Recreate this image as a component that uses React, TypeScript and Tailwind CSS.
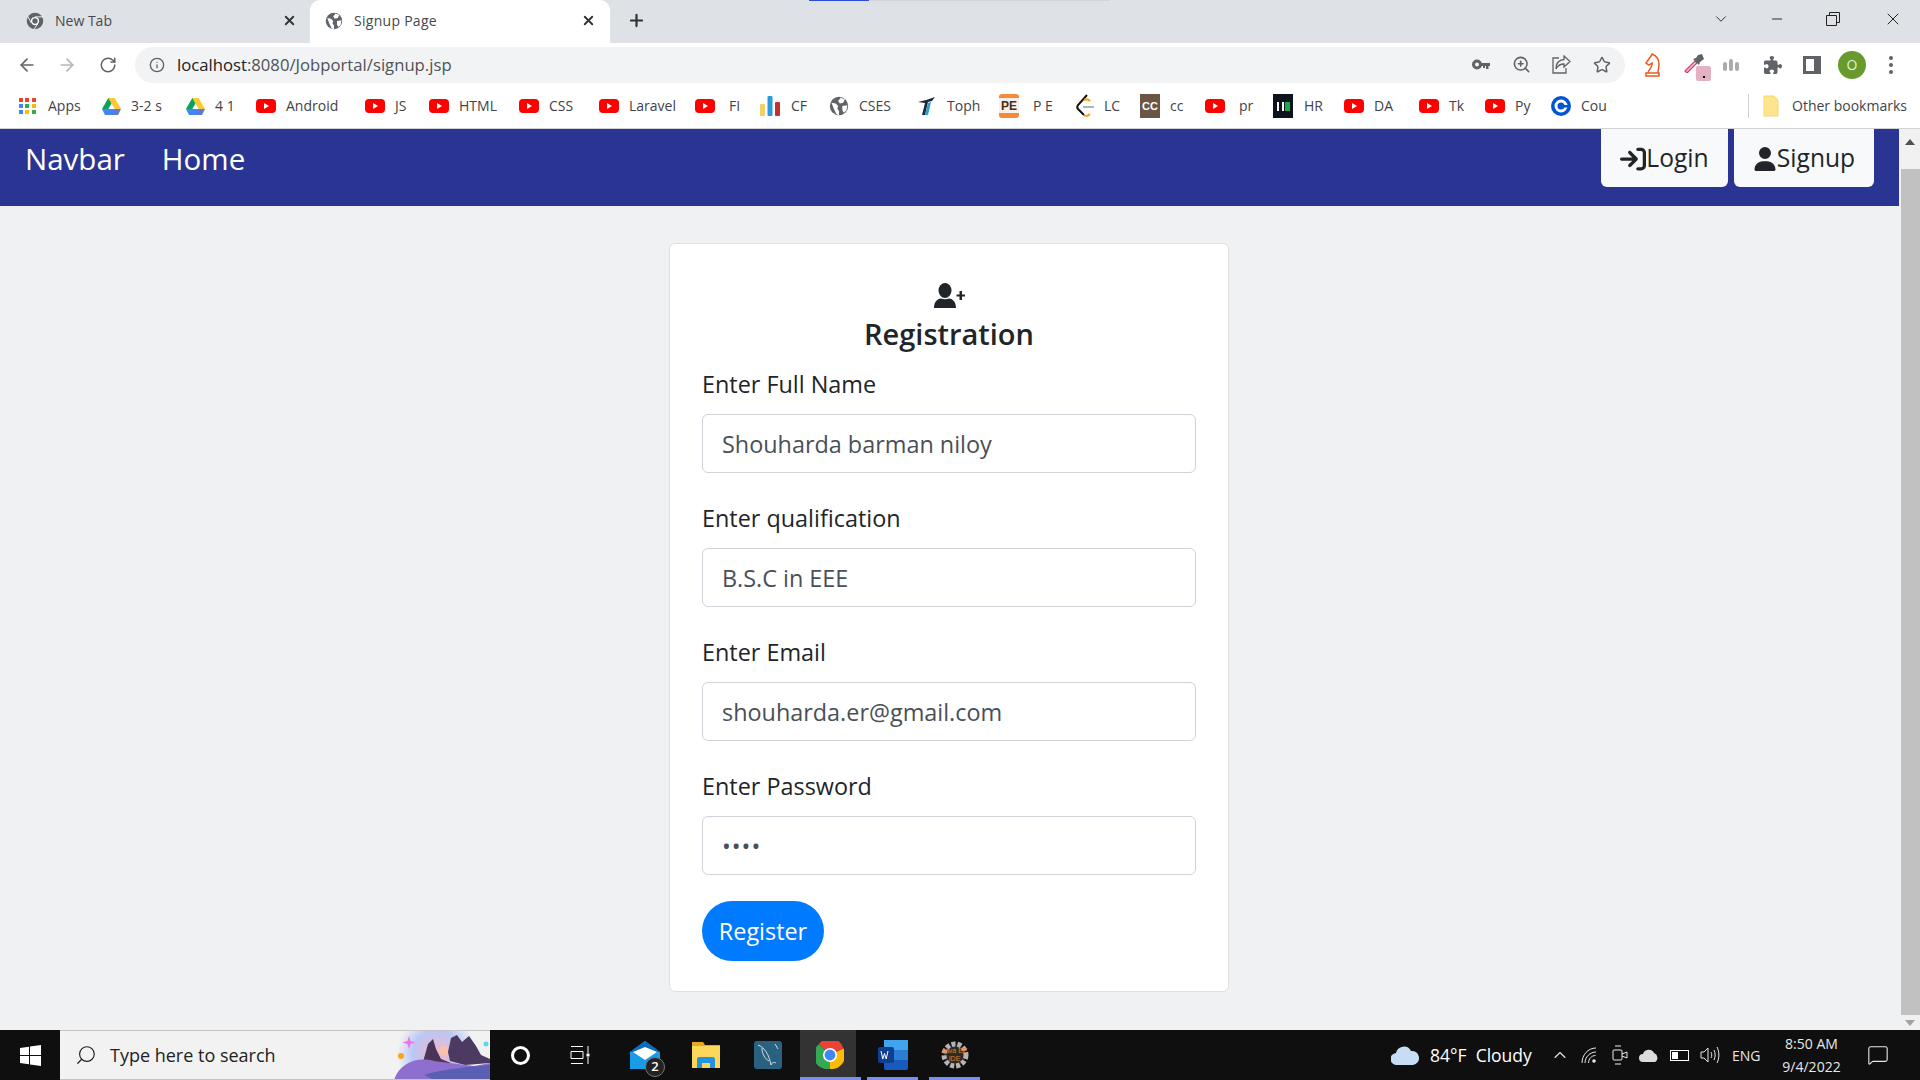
import { ArrowLeft, ArrowRight, ChevronDown, ChevronUp, Info, Minus, MessageSquare, Plus, RotateCw, Search, Star, X, ZoomIn } from "lucide-react";
import { FaArrowRightToBracket, FaPuzzlePiece, FaUser } from "react-icons/fa6";
import { ReactNode } from "react";

function Globe({ size = 18 }: { size?: number }) {
  return (
    <svg width={size} height={size} viewBox="0 0 24 24">
      <circle cx="12" cy="12" r="11" fill="#5f6368" />
      <path d="M3 8l5 1 3 3-1 3 2 3v5l-3-1-3-6zM14 2l5 2-2 4-4 1-2-3zM16 12l6-1-1 6-3 3-2-3z" fill="#fff" />
    </svg>
  );
}

function ChromeGrey() {
  return (
    <svg width="18" height="18" viewBox="0 0 24 24">
      <circle cx="12" cy="12" r="11" fill="#5f6368" />
      <circle cx="12" cy="12" r="5.5" fill="#fff" />
      <circle cx="12" cy="12" r="3.6" fill="#5f6368" />
      <path d="M12 6.5h10M7 14.5L2.5 6M15.5 16l-5 7.5" stroke="#fff" strokeWidth="1.2" />
    </svg>
  );
}

function Youtube() {
  return (
    <svg width="20" height="14" viewBox="0 0 20 14">
      <rect width="20" height="14" rx="4" fill="#f00" />
      <path d="M8 4l5 3-5 3z" fill="#fff" />
    </svg>
  );
}

function Drive() {
  return (
    <svg width="19" height="17" viewBox="0 0 19 17">
      <path d="M6.300 0h6.400l-3.200 5.500-3.200 5.500h-6.300z" fill="#0ba25e" />
      <path d="M6.300 0h6.400l6.300 11h-6.300z" fill="#fcc934" />
      <path d="M0 11h19l-3 6h-13z" fill="#4285f4" />
      <path d="M12.700 11h6.300l-3 6h-6z" fill="#ea4335" opacity="0.15" />
    </svg>
  );
}

function Apps() {
  const colors = ["#ea4335", "#ea4335", "#ea4335", "#4285f4", "#34a853", "#fbbc05", "#4285f4", "#fbbc05", "#34a853"];
  return (
    <div className="grid w-[17px] grid-cols-3 gap-[2px]">
      {colors.map((c, i) => (
        <svg key={i} width="4" height="4"><rect width="4" height="4" fill={c} /></svg>
      ))}
    </div>
  );
}

function Bars() {
  return (
    <svg width="20" height="20" viewBox="0 0 20 20">
      <rect x="0" y="8" width="5" height="12" rx="1" fill="#f5cf63" />
      <rect x="7.500" y="0" width="5" height="20" rx="1" fill="#2d9bd8" />
      <rect x="15" y="6" width="5" height="14" rx="1" fill="#c62f2f" />
    </svg>
  );
}

function Toph() {
  return (
    <svg width="20" height="20" viewBox="0 0 20 20">
      <path d="M1 6c5-1 11-3 17-5l-3 4-4 1-3 13H5l3-12z" fill="#1b2a36" />
      <path d="M11 7l3-1-3 13H8z" fill="#2d9bd8" />
    </svg>
  );
}

function PeIcon() {
  return (
    <div className="flex h-[24px] w-[20px] flex-col overflow-hidden rounded-[3px] bg-[#f5893d]">
      <div className="mt-[4px] flex h-[15px] items-center justify-center bg-[#f8f1e8] font-['Liberation_Sans'] text-[12px] font-bold text-[#4b2a16]">PE</div>
    </div>
  );
}

function Leet() {
  return (
    <svg width="20" height="24" viewBox="0 0 20 24" fill="none">
      <path d="M12 1L3 11c-1 1.500-1 3 0 4l6 6" stroke="#111" strokeWidth="2" />
      <path d="M9 21c2 1.500 4 1 6-1" stroke="#f6a21a" strokeWidth="2" />
      <path d="M8 13h11" stroke="#b3b3b3" strokeWidth="2" />
      <path d="M9 6c2-1 4-1 6 1" stroke="#f6a21a" strokeWidth="2" />
    </svg>
  );
}

function CcIcon() {
  return (
    <div className="flex h-[24px] w-[20px] items-center justify-center bg-[#6b5544] font-['Liberation_Sans'] text-[11px] font-bold text-white">CC</div>
  );
}

function HrIcon() {
  return (
    <div className="flex h-[24px] w-[20px] items-center justify-center gap-[1px] bg-[#0e141e]">
      <span className="h-[9px] w-[7px] border-x-[2px] border-white" />
      <span className="h-[9px] w-[5px] bg-[#1ba94c]" />
    </div>
  );
}

function Coursera() {
  return (
    <svg width="20" height="20" viewBox="0 0 20 20">
      <circle cx="10" cy="10" r="10" fill="#0056d2" />
      <circle cx="10" cy="10" r="5" fill="none" stroke="#fff" strokeWidth="3" />
      <rect x="13" y="9" width="5" height="2.500" fill="#0056d2" />
    </svg>
  );
}

const bookmarks: { icon: ReactNode; label: string; w: string; gap: string }[] = [
  { icon: <Apps />, label: "Apps", w: "w-[83px]", gap: "w-[29px]" },
  { icon: <Drive />, label: "3-2 s", w: "w-[84px]", gap: "w-[29px]" },
  { icon: <Drive />, label: "4 1", w: "w-[70px]", gap: "w-[29px]" },
  { icon: <Youtube />, label: "Android", w: "w-[109px]", gap: "w-[30px]" },
  { icon: <Youtube />, label: "JS", w: "w-[64px]", gap: "w-[30px]" },
  { icon: <Youtube />, label: "HTML", w: "w-[90px]", gap: "w-[30px]" },
  { icon: <Youtube />, label: "CSS", w: "w-[80px]", gap: "w-[30px]" },
  { icon: <Youtube />, label: "Laravel", w: "w-[96px]", gap: "w-[30px]" },
  { icon: <Youtube />, label: "FI", w: "w-[65px]", gap: "w-[34px]" },
  { icon: <Bars />, label: "CF", w: "w-[69px]", gap: "w-[31px]" },
  { icon: <Globe size={20} />, label: "CSES", w: "w-[88px]", gap: "w-[30px]" },
  { icon: <Toph />, label: "Toph", w: "w-[82px]", gap: "w-[30px]" },
  { icon: <PeIcon />, label: "P E", w: "w-[76px]", gap: "w-[34px]" },
  { icon: <Leet />, label: "LC", w: "w-[65px]", gap: "w-[29px]" },
  { icon: <CcIcon />, label: "cc", w: "w-[65px]", gap: "w-[30px]" },
  { icon: <Youtube />, label: "pr", w: "w-[68px]", gap: "w-[34px]" },
  { icon: <HrIcon />, label: "HR", w: "w-[71px]", gap: "w-[31px]" },
  { icon: <Youtube />, label: "DA", w: "w-[75px]", gap: "w-[30px]" },
  { icon: <Youtube />, label: "Tk", w: "w-[66px]", gap: "w-[30px]" },
  { icon: <Youtube />, label: "Py", w: "w-[66px]", gap: "w-[30px]" },
  { icon: <Coursera />, label: "Cou", w: "w-[60px]", gap: "w-[30px]" },
];

function TabStrip() {
  return (
    <div className="relative flex h-[43px] items-end bg-[#dee1e6] text-[14px] text-[#45494e]">
      <div className="absolute left-[809px] top-0 h-px w-[60px] bg-[#2b4ddb]" />
      <div className="absolute left-[869px] top-0 h-px w-[241px] bg-[#d2d4d8]" />
      <div className="flex h-[43px] w-[310px] items-center pb-[2px] pl-[26px] pr-[13px]">
        <ChromeGrey />
        <span className="ml-[11px] flex-1">New Tab</span>
        <X size={15} strokeWidth={3} color="#333" />
      </div>
      <div className="flex h-[43px] w-[300px] items-center rounded-t-[10px] bg-white pb-[2px] pl-[15px] pr-[14px]">
        <Globe />
        <span className="ml-[11px] flex-1 tracking-[0.02em]">Signup Page</span>
        <X size={15} strokeWidth={3} color="#333" />
      </div>
      <div className="flex h-[43px] w-[1102px] items-center pb-[2px] pl-[17px]">
        <Plus size={19} strokeWidth={2.8} color="#333" />
      </div>
      <div className="flex h-[38px] w-[208px] items-center self-start text-[#222]">
        <ChevronDown size={18} strokeWidth={1.2} />
        <Minus size={16} strokeWidth={1.4} className="ml-[39px]" />
        <svg className="ml-[41px]" width="14" height="14" viewBox="0 0 14 14" fill="none" stroke="#222"><path d="M.5 3.500h10v10H.5zM3.500 3.500v-3h10v10h-3" /></svg>
        <X size={20} strokeWidth={1.2} className="ml-[43px]" />
      </div>
    </div>
  );
}

function Toolbar() {
  return (
    <div className="flex h-[43px] items-center bg-white text-[#5f6368]">
      <ArrowLeft size={20} className="ml-[17px]" />
      <ArrowRight size={20} color="#b4b6b9" className="ml-[20px]" />
      <RotateCw size={18} className="ml-[22px]" />
      <div className="ml-[18px] flex h-[36px] w-[1490px] items-center rounded-full bg-[#f1f3f4]">
        <Info size={16} className="ml-[14px]" />
        <span className="ml-[12px] flex-1 text-[16.7px] text-[#4f5256]">
          <span className="text-[#202124]">localhost</span>:8080/Jobportal/signup.jsp
        </span>
        <svg className="mr-[22px]" width="18" height="11" viewBox="0 0 18 11">
          <circle cx="5" cy="5.500" r="3.500" fill="none" stroke="#5f6368" strokeWidth="3" />
          <path d="M8 4h10v3h-1.500v3h-2.500V7h-1v2h-2V7H8z" fill="#5f6368" />
        </svg>
        <ZoomIn size={19} className="mr-[21px]" />
        <svg className="mr-[22px]" width="19" height="19" viewBox="0 0 19 19" fill="none" stroke="#5f6368" strokeWidth="1.3">
          <path d="M7 3H1v15h13v-5" />
          <path d="M12 1l6 5.500-6 5.500V9c-4 0-6 1-8 5 0-6 3-9 8-9.500z" />
        </svg>
        <Star size={18} className="mr-[14px]" />
      </div>
      <svg className="ml-[19px]" width="17" height="24" viewBox="0 0 17 24" fill="none" stroke="#ea5a1f" strokeWidth="1.5">
        <path d="M2 23h13v-3H2zM4 20c0-3 5-6 4-10l-3 2-3-2 5-7 1-2c5 2 7 6 7 10 0 3-1 6-1 9" />
      </svg>
      <div className="relative ml-[22px] h-[24px] w-[28px]">
        <svg width="22" height="20" viewBox="0 0 22 20" fill="none">
          <path d="M2 18L12 8l2 2L4 20z" fill="#f4bcd0" stroke="#d1416f" strokeWidth="1.2" />
          <path d="M10 6l6 6 1-3 4-3-2-5-4 1-2 3z" fill="#5f6368" />
        </svg>
        <div className="absolute bottom-[-4px] right-0 flex h-[15px] w-[15px] items-end justify-center rounded-[2px] bg-[#e3b1c1] pb-[3px]">
          <div className="h-[2px] w-[2px] bg-black" />
        </div>
      </div>
      <div className="ml-[12px] flex h-[12px] w-[18px] items-end gap-[2px]">
        <div className="h-[9px] w-[4px] rounded-sm bg-[#a9abad]" />
        <div className="h-[12px] w-[4px] rounded-sm bg-[#a9abad]" />
        <div className="h-[9px] w-[4px] rounded-sm bg-[#a9abad]" />
      </div>
      <FaPuzzlePiece size={18} className="ml-[23px]" />
      <div className="ml-[21px] h-[18px] w-[18px] border-[3px] border-r-[7px] border-[#5f6368]" />
      <div className="ml-[17px] flex h-[28px] w-[28px] items-center justify-center rounded-full bg-[#689a2e] text-[14px] text-[#e3efd5]">O</div>
      <div className="ml-[23px] flex flex-col gap-[3px]">
        <div className="h-[4px] w-[4px] rounded-full bg-[#5f6368]" />
        <div className="h-[4px] w-[4px] rounded-full bg-[#5f6368]" />
        <div className="h-[4px] w-[4px] rounded-full bg-[#5f6368]" />
      </div>
    </div>
  );
}

function BookmarkBar() {
  return (
    <div className="flex h-[43px] items-center border-b border-[#d0d2d5] bg-white pb-[2px] pl-[19px] text-[14px] text-[#3f4347]">
      {bookmarks.map((b) => (
        <div key={b.label} className={`flex items-center ${b.w}`}>
          <div className={`flex items-center ${b.gap}`}>{b.icon}</div>
          <span className="mt-[-1px]">{b.label}</span>
        </div>
      ))}
      <div className="ml-[137px] h-[24px] w-px bg-[#d0d2d5]" />
      <svg className="ml-[14px]" width="16" height="22" viewBox="0 0 16 22">
        <path d="M1 1h10l4 4v16H1z" fill="#fde58f" stroke="#f5d76e" />
      </svg>
      <span className="ml-[13px] mt-[-1px]">Other bookmarks</span>
    </div>
  );
}

function Field({ label, value, dots }: { label: string; value: string; dots?: boolean }) {
  return (
    <div className="mb-[25px]">
      <label className="mb-[12px] mt-[2px] block text-[23.4px] leading-[36px] text-[#212529]">{label}</label>
      <div className={`flex h-[59px] items-center rounded-[6px] border border-[#ced4da] px-[19px] pt-[3px] text-[23.4px] text-[#495057] ${dots ? "tracking-[1px]" : ""}`}>
        {value}
      </div>
    </div>
  );
}

function RegisterIcon() {
  return (
    <svg width="31" height="25" viewBox="0 0 31 25" fill="#212529">
      <ellipse cx="11" cy="7.500" rx="6.500" ry="7.500" />
      <path d="M0 25c0-6 3-9 7-9.500 2.500 1 5.500 1 8 0 4 .5 7 3.500 7 9.500z" />
      <path d="M25.500 8h2.500v3.500h3v2h-3V17h-2.500v-3.500h-3v-2h3z" />
    </svg>
  );
}

function SignupCard() {
  return (
    <div className="flex h-[749px] w-[560px] flex-col rounded-[6px] border border-[#dfe0e1] bg-white px-[32px] pt-[39px]">
      <div className="mb-[12px] flex flex-col items-center text-[#212529]">
        <RegisterIcon />
        <h1 className="mt-[8px] text-[29px] font-semibold leading-[36px]">Registration</h1>
      </div>
      <Field label="Enter Full Name" value="Shouharda barman niloy" />
      <Field label="Enter qualification" value="B.S.C in EEE" />
      <Field label="Enter Email" value="shouharda.er@gmail.com" />
      <Field label="Enter Password" value="••••" dots />
      <button className="mt-[1px] h-[60px] w-[122px] rounded-full bg-[#007bff] pt-[2px] text-[23.4px] text-white">Register</button>
    </div>
  );
}

function Page() {
  return (
    <div className="flex h-[901px]">
      <div className="flex w-[1899px] flex-col bg-[#eff1f3]">
        <nav className="flex h-[77px] items-start bg-[#2a3593] pl-[25px] pr-[25px] text-[29.5px] text-white">
          <a className="mt-[8px]">Navbar</a>
          <a className="ml-[37px] mt-[8px]">Home</a>
          <div className="ml-auto flex gap-[6px] text-[24.6px] text-[#212529]">
            <button className="flex h-[58px] w-[127px] items-center justify-center rounded-b-[6px] bg-[#f8f9fa] pt-[1px]">
              <FaArrowRightToBracket size={26} />Login
            </button>
            <button className="flex h-[58px] w-[140px] items-center justify-center rounded-b-[6px] bg-[#f8f9fa] pt-[1px]">
              <FaUser size={24} />Signup
            </button>
          </div>
        </nav>
        <main className="flex flex-1 justify-center pr-[1px] pt-[37px]">
          <SignupCard />
        </main>
      </div>
      <div className="flex w-[21px] flex-col items-center bg-[#f1f1f1]">
        <div className="mt-[10px] h-0 w-0 border-x-[5px] border-b-[6px] border-x-transparent border-b-[#505050]" />
        <div className="mt-[24px] h-[846px] w-[19px] self-end bg-[#c1c1c1]" />
        <div className="mt-[5px] h-0 w-0 border-x-[5px] border-t-[6px] border-x-transparent border-t-[#a3a3a3]" />
      </div>
    </div>
  );
}

function SearchArt() {
  return (
    <svg width="106" height="50" viewBox="0 0 106 50">
      <defs>
        <radialGradient id="glow" cx="0.5" cy="0.5" r="0.5">
          <stop offset="0" stopColor="#f8b6c8" />
          <stop offset="0.6" stopColor="#b9c7f7" />
          <stop offset="1" stopColor="#f2f2f2" />
        </radialGradient>
      </defs>
      <circle cx="53" cy="24" r="40" fill="url(#glow)" />
      <path d="M25 6l1.500 5 5 1.500-5 1.500-1.500 5-1.500-5-5-1.500 5-1.500z" fill="#ef72ea" />
      <circle cx="17" cy="26" r="3" fill="#f9a51a" />
      <circle cx="102" cy="14" r="2.500" fill="#58d8ea" />
      <circle cx="60" cy="21" r="5" fill="#f9c0b0" />
      <path d="M39 32l5-18 5-5 3 10 5 10 10 4-16 3z" fill="#4a3556" />
      <path d="M64 22l3-14 6-3 5 7 7-6 7 10 5 9 9 4v4l-25 2-15-4z" fill="#4d3a63" />
      <path d="M10 50c5-16 22-24 40-19l40 5 16-3v17z" fill="#8e6fd0" />
      <path d="M40 45c15-5 30-6 42-8l24-2v15H50z" fill="#5b5fb4" />
    </svg>
  );
}

function Taskbar() {
  return (
    <div className="flex h-[50px] items-stretch bg-[#0f0f0f] text-white">
      <div className="flex w-[60px] items-center justify-center">
        <svg width="21" height="21" viewBox="0 0 21 21" fill="#fff"><path d="M0 3l9-1.300v8.300H0zM10 1.500L21 0v10H10zM0 11h9v8.300L0 18zM10 11h11v10l-11-1.500z" /></svg>
      </div>
      <div className="flex w-[430px] items-center overflow-hidden border-y border-[#c4c4c4] bg-[#f2f2f2] pl-[15px] text-[18px] text-[#222]">
        <Search size={22} strokeWidth={1.3} className="-scale-x-100" />
        <span className="ml-[13px] flex-1">Type here to search</span>
        <SearchArt />
      </div>
      <div className="flex w-[60px] items-center justify-center"><div className="h-[19px] w-[19px] rounded-full border-[3px] border-white" /></div>
      <div className="flex w-[60px] items-center justify-center">
        <svg width="20" height="20" viewBox="0 0 20 20" stroke="#fff" fill="none"><path d="M1 1.500h12M1 18.500h12M1 6.500h12v7H1zM18 1v7M18 12v7" /><rect x="16.500" y="8.500" width="3" height="3" fill="#fff" stroke="none" /></svg>
      </div>
      <div className="relative ml-[12px] flex w-[46px] items-center justify-center">
        <svg width="30" height="28" viewBox="0 0 30 28"><path d="M0 11L15 0l15 11v17H0z" fill="#1a9be6" /><path d="M15 0l15 11H0z" fill="#0f6cbd" /><path d="M3 11l12-5 12 5-12 8z" fill="#fff" /></svg>
        <div className="absolute bottom-[3px] right-[3px] flex h-[20px] w-[20px] items-center justify-center rounded-full border border-[#777] bg-[#222] text-[13px] font-semibold">2</div>
      </div>
      <div className="ml-[15px] flex w-[46px] items-center justify-center">
        <svg width="28" height="26" viewBox="0 0 28 26"><path d="M0 0h11l2 3h15v23H0z" fill="#e8a81f" /><rect y="4" width="28" height="22" fill="#fbd75b" /><path d="M5 26v-9c0-1 1-2 2-2h14c1 0 2 1 2 2v9h-5v-5h-8v5z" fill="#2492dd" /></svg>
      </div>
      <div className="ml-[16px] flex w-[46px] items-center justify-center">
        <svg width="28" height="28" viewBox="0 0 28 28"><rect width="28" height="28" rx="3" fill="#2b6180" /><path d="M4 4c6 2 11 9 13 20 1-3 3-3 5-2M8 7c0 6 3 11 7 13M21 3l3 5" stroke="#cfdde6" fill="none" /></svg>
      </div>
      <div className="relative ml-[9px] flex w-[56px] items-center justify-center bg-[#333] pl-[3px]">
        <svg width="28" height="28" viewBox="0 0 30 30">
          <path d="M15 15L3 3.500A15 15 0 0 1 29.500 8z" fill="#ea4335" />
          <path d="M15 15L29.500 8A15 15 0 0 1 15 30z" fill="#fbbc05" />
          <path d="M15 15v15A15 15 0 0 1 3 3.500z" fill="#34a853" />
          <circle cx="15" cy="15" r="7.500" fill="#fff" />
          <circle cx="15" cy="15" r="5.800" fill="#4285f4" />
        </svg>
        <div className="absolute bottom-0 left-0 h-[3px] w-[61px] bg-[#7b8ff0]" />
      </div>
      <div className="relative ml-[11px] flex w-[51px] items-center justify-center">
        <svg width="30" height="30" viewBox="0 0 30 30"><rect x="6" y="0" width="24" height="30" rx="2" fill="#185abd" /><rect x="6" y="0" width="24" height="10" fill="#41a5ee" /><rect x="6" y="10" width="24" height="10" fill="#2b7cd3" /><rect x="0" y="7" width="16" height="16" rx="2" fill="#103f91" /><path d="M3 11l1.800 8 1.700-5.500 1.700 5.500 1.800-8" stroke="#fff" fill="none" /></svg>
        <div className="absolute bottom-0 left-0 h-[3px] w-[51px] bg-[#7b8ff0]" />
      </div>
      <div className="relative ml-[11px] flex w-[51px] items-center justify-center">
        <svg width="28" height="28" viewBox="0 0 28 28"><circle cx="14" cy="14" r="11" fill="#2b2b2b" stroke="#b5b5b5" strokeWidth="5" strokeDasharray="4 2" /></svg>
        <div className="absolute inset-0 flex flex-col items-center justify-center font-['Liberation_Sans'] text-[7px] leading-[8px] text-[#e0821e]">
          <span>Java EE</span>
          <span>IDE</span>
        </div>
        <div className="absolute bottom-0 left-0 h-[3px] w-[51px] bg-[#7b8ff0]" />
      </div>
      <div className="ml-[411px] flex w-[150px] items-center gap-[11px] text-[17.5px]">
        <svg width="28" height="20" viewBox="0 0 28 20"><path d="M6 20a6 6 0 0 1-1-12 8 8 0 0 1 15-2 7 7 0 0 1 2 14z" fill="#c7dcf5" /></svg>
        <span className="whitespace-nowrap">84°F&nbsp; Cloudy</span>
      </div>
      <div className="flex flex-1 items-center text-[#e8e8e8]">
        <ChevronUp size={20} strokeWidth={1.3} className="ml-[9px]" />
        <svg className="ml-[11px]" width="17" height="17" viewBox="0 0 17 17" fill="none" stroke="#e8e8e8">
          <path d="M1 16C1 8 7 1 15 1M4 16c0-6 5-11 11-11M7.500 16c0-4 3-7.500 7-7.500" />
          <circle cx="13" cy="14" r="1.800" fill="#e8e8e8" stroke="none" />
        </svg>
        <svg className="ml-[14px]" width="16" height="20" viewBox="0 0 16 20" fill="none" stroke="#eee"><rect x="1" y="5" width="9" height="10" rx="1" /><path d="M10 9l5-2v6l-5-2M3 1h6M3 19h6" /></svg>
        <svg className="ml-[11px]" width="20" height="14" viewBox="0 0 20 14"><path d="M4 14a4 4 0 0 1 0-8 6 6 0 0 1 11-1 5 5 0 0 1 1 9z" fill="#ddd" /></svg>
        <div className="ml-[11px] h-[11px] w-[19px] border border-white p-px"><div className="h-full w-[6px] bg-white" /></div>
        <svg className="ml-[11px]" width="20" height="20" viewBox="0 0 20 20" fill="none" stroke="#e8e8e8">
          <path d="M1 7h3l4-4v14l-4-4H1zM11 7c1 2 1 4 0 6M14 5c1.500 3 1.500 7 0 10M17 2c2.500 5 2.500 11 0 16" />
        </svg>
        <span className="ml-[12px] text-[14px]">ENG</span>
        <div className="ml-[21px] flex w-[60px] flex-col items-center text-[14px] leading-[23px]">
          <span className="whitespace-nowrap">8:50 AM</span>
          <span className="whitespace-nowrap">9/4/2022</span>
        </div>
        <MessageSquare size={22} strokeWidth={1.2} className="ml-[25px]" />
      </div>
    </div>
  );
}

export default function App() {
  return (
    <div className="flex h-[1080px] w-[1920px] flex-col overflow-hidden font-['Open_Sans',sans-serif]">
      <TabStrip />
      <Toolbar />
      <BookmarkBar />
      <Page />
      <Taskbar />
    </div>
  );
}
